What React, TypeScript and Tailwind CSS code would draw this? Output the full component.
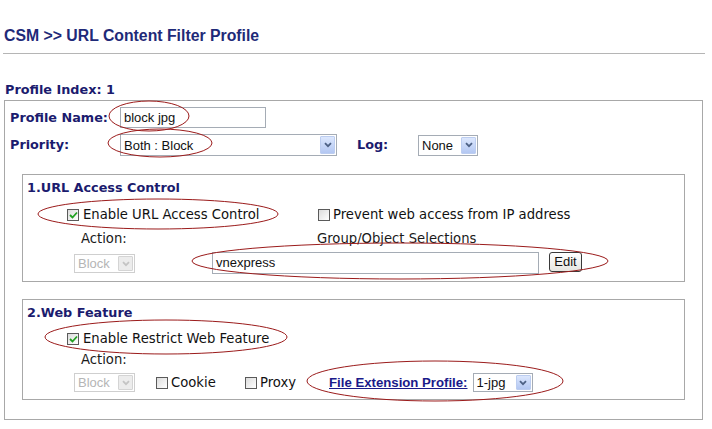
import React from "react";

const verdana = { fontFamily: '"DejaVu Sans", Verdana, sans-serif' };
const arial = { fontFamily: '"Liberation Sans", Arial, sans-serif' };

function Arrow({ disabled }: { disabled?: boolean }) {
  return (
    <div
      className={
        "ml-auto mr-[1px] flex w-[15px] self-stretch my-[1px] items-center justify-center rounded-[1px] border " +
        (disabled
          ? "border-[#d4d4d4] bg-[#ececec]"
          : "border-[#bccdf0] bg-gradient-to-b from-[#dce7fd] to-[#b3c7f2]")
      }
    >
      <svg width="8" height="6" viewBox="0 0 8 6">
        <path
          d="M1 1.2 L4 4.2 L7 1.2"
          fill="none"
          stroke={disabled ? "#c4c4c4" : "#4d6185"}
          strokeWidth="1.8"
        />
      </svg>
    </div>
  );
}

function Select({
  w,
  h,
  text,
  disabled,
}: {
  w: number;
  h: number;
  text: string;
  disabled?: boolean;
}) {
  return (
    <div
      className={
        "flex items-stretch border bg-white " +
        (disabled ? "border-[#cfcfcf] text-[#b5b5b5]" : "border-[#a5acb5] text-[#111]")
      }
      style={{ width: w, height: h }}
    >
      <span className="flex items-center pl-[3px] text-[13px] leading-none" style={arial}>
        {text}
      </span>
      <Arrow disabled={disabled} />
    </div>
  );
}

function Check({ checked }: { checked?: boolean }) {
  return (
    <span className="relative inline-flex h-[12px] w-[12px] shrink-0 items-center justify-center border border-[#5a5a5a] bg-gradient-to-br from-[#dcdcdc] to-[#ffffff]">
      {checked && (
        <svg width="9" height="8" viewBox="0 0 9 8">
          <path d="M1 4 L3.5 6.5 L8 1.5" fill="none" stroke="#21a121" strokeWidth="1.8" />
        </svg>
      )}
    </span>
  );
}

const navy = "text-[#1b1b6e]";

export default function App() {
  return (
    <div className="relative h-[429px] w-[712px] overflow-hidden bg-white">
      <div
        className="pl-[4px] pt-[27px] text-[15.8px] font-bold leading-[18px] text-[#1f2a78]"
        style={arial}
      >
        CSM &gt;&gt; URL Content Filter Profile
      </div>
      <div className="ml-[3px] mt-[8px] h-[1px] w-[702px] bg-[#b5b5b5]" />
      <div
        className={"mt-[29px] pl-[5px] text-[12.8px] font-bold leading-[14px] " + navy}
        style={verdana}
      >
        Profile Index: 1
      </div>

      <div className="ml-[4px] mt-[3px] w-[699px] border border-[#a8a8a8] pb-[19px]">
        <div className="flex items-center pl-[5px] pt-[6px]">
          <div className={"w-[110px] text-[12.8px] font-bold " + navy} style={verdana}>
            Profile Name:
          </div>
          <div
            className="flex h-[21px] w-[146px] items-center border border-[#a5acb5] pl-[3px] text-[13px] text-[#111]"
            style={arial}
          >
            block jpg
          </div>
        </div>
        <div className="mt-[6px] flex items-center pl-[5px]">
          <div className={"w-[110px] text-[12.8px] font-bold " + navy} style={verdana}>
            Priority:
          </div>
          <Select w={217} h={22} text="Both : Block" />
          <div className={"ml-[20px] w-[61px] text-[12.8px] font-bold " + navy} style={verdana}>
            Log:
          </div>
          <Select w={60} h={21} text="None" />
        </div>

        {/* Section 1 */}
        <div className="ml-[17px] mt-[18px] w-[663px] border border-[#a8a8a8] pb-[7px]">
          <div
            className={"pl-[4px] pt-[6px] text-[12.8px] font-bold leading-[14px] " + navy}
            style={verdana}
          >
            1.URL Access Control
          </div>
          <div
            className="mt-[12px] flex items-center text-[13.2px] leading-[16px] text-[#111]"
            style={verdana}
          >
            <div className="flex w-[295px] items-center pl-[44px]">
              <Check checked />
              <span className="ml-[4px]">Enable URL Access Control</span>
            </div>
            <Check />
            <span className="ml-[3px]">Prevent web access from IP address</span>
          </div>
          <div
            className="mt-[8px] flex items-center text-[13.2px] leading-[16px] text-[#1a1a1a]"
            style={verdana}
          >
            <div className="w-[294px] pl-[58px]">Action:</div>
            <div>Group/Object Selections</div>
          </div>
          <div className="mt-[5px] flex items-start">
            <div className="ml-[51px] mt-[2px]">
              <Select w={61} h={19} text="Block" disabled />
            </div>
            <div
              className="ml-[77px] flex h-[22px] w-[327px] items-center border border-[#a5acb5] pl-[3px] text-[13px] text-[#111]"
              style={arial}
            >
              vnexpress
            </div>
            <div
              className="ml-[10px] flex h-[20px] w-[33px] items-center justify-center rounded-[3px] border border-[#3a3a3a] bg-gradient-to-b from-[#ffffff] to-[#e6e6e0] text-[13px] text-[#111]"
              style={arial}
            >
              Edit
            </div>
          </div>
        </div>

        {/* Section 2 */}
        <div className="ml-[17px] mt-[17px] w-[663px] border border-[#a8a8a8] pb-[7px]">
          <div
            className={"pl-[4px] pt-[6px] text-[12.8px] font-bold leading-[14px] " + navy}
            style={verdana}
          >
            2.Web Feature
          </div>
          <div
            className="mt-[11px] flex items-center pl-[44px] text-[13.2px] leading-[16px] text-[#111]"
            style={verdana}
          >
            <Check checked />
            <span className="ml-[4px]">Enable Restrict Web Feature</span>
          </div>
          <div
            className="mt-[5px] pl-[58px] text-[13.2px] leading-[16px] text-[#1a1a1a]"
            style={verdana}
          >
            Action:
          </div>
          <div
            className="mt-[5px] flex items-center text-[13.2px] leading-[16px] text-[#111]"
            style={verdana}
          >
            <div className="ml-[51px] w-[82px]">
              <Select w={61} h={19} text="Block" disabled />
            </div>
            <div className="flex w-[89px] items-center">
              <Check />
              <span className="ml-[3px]">Cookie</span>
            </div>
            <div className="flex w-[84px] items-center">
              <Check />
              <span className="ml-[3px]">Proxy</span>
            </div>
            <a
              className="text-[13.2px] font-bold text-[#1a1a8a] underline"
              style={arial}
            >
              File Extension Profile:
            </a>
            <div className="ml-[5px]">
              <Select w={60} h={19} text="1-jpg" />
            </div>
          </div>
        </div>
      </div>

      <svg
        className="pointer-events-none absolute left-0 top-0"
        width="712"
        height="429"
        viewBox="0 0 712 429"
      >
        <g fill="none" stroke="#9b1b1b" strokeWidth="1">
          <ellipse cx="149" cy="116" rx="40" ry="15" />
          <ellipse cx="160" cy="143" rx="52" ry="14" />
          <ellipse cx="158" cy="214" rx="120" ry="15" />
          <ellipse cx="400" cy="261" rx="208" ry="18" />
          <ellipse cx="166" cy="337" rx="121" ry="17" />
          <ellipse cx="435" cy="381" rx="128" ry="20" />
        </g>
      </svg>
    </div>
  );
}
